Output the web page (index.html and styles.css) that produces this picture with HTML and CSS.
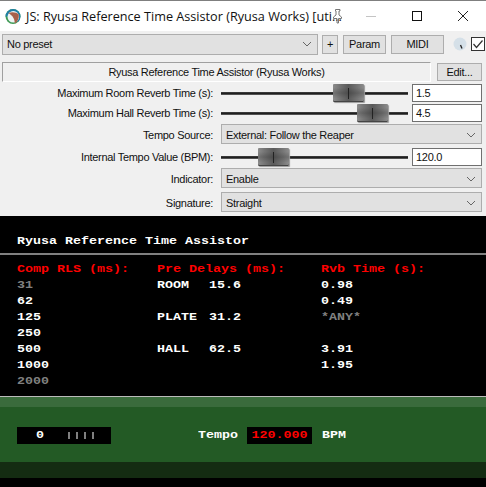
FILE: index.html
```html
<!DOCTYPE html>
<html lang="en">
<head>
<meta charset="utf-8">
<title>JS: Ryusa Reference Time Assistor</title>
<link rel="stylesheet" href="styles.css">
</head>
<body>
<div class="titlebar">
  <svg class="logo" width="16" height="17" viewBox="0 0 16 17">
    <circle cx="8" cy="8.5" r="7.5" fill="#3f9a55"/>
    <path d="M0.5 8.5 A7.5 7.5 0 0 1 15.5 8.5 A7.5 7.5 0 0 1 13 14 L8 8.5 Z" fill="#1f7fa6"/>
    <circle cx="8.3" cy="8.8" r="5.8" fill="#eef3f3"/>
    <path d="M3.2 5 C7 3.8 11.5 4.2 13.8 6.4 C14.2 10 12.8 13.6 9.8 15.6 C9.8 11.5 8 7.5 3.2 5 Z" fill="#a8604a"/>
  </svg>
  <span class="title">JS: Ryusa Reference Time Assistor (Ryusa Works) [uti...</span>
  <svg class="pin" width="15" height="16" viewBox="0 0 15 16">
    <path d="M5.5 1.5 H10 V3 H9 V7 L11.5 9 V10.5 H8.5 V15 H7 V10.5 H3.5 V9 L6 7 V3 H5.5 Z" fill="#fff" fill-opacity="0.45" stroke="#777" stroke-width="1"/>
  </svg>
  <div class="winctl">
    <svg width="12" height="12" viewBox="0 0 12 12"><path d="M1 6.5 H11" stroke="#c4c4c4"/></svg>
    <svg width="12" height="12" viewBox="0 0 12 12"><rect x="1.5" y="1.5" width="9" height="9" fill="none" stroke="#111"/></svg>
    <svg width="12" height="12" viewBox="0 0 12 12"><path d="M1 1 L11 11 M11 1 L1 11" stroke="#222" fill="none"/></svg>
  </div>
</div>

<div class="panel">
  <div class="toolbar">
    <div class="combo preset"><span>No preset</span><svg class="chev" width="10" height="6" viewBox="0 0 10 6"><path d="M1 1 L5 5 L9 1" fill="none" stroke="#666"/></svg></div>
    <div class="btn plus">+</div>
    <div class="btn param">Param</div>
    <div class="btn midi">MIDI</div>
    <svg class="knob" width="14" height="14" viewBox="0 0 14 14"><circle cx="7" cy="7" r="6.5" fill="#d5e0e8"/><path d="M7.5 8 L9 11.5" stroke="#222" stroke-width="1.3"/></svg>
    <svg class="check" width="14" height="14" viewBox="0 0 14 14"><rect x="0.5" y="0.5" width="13" height="13" fill="#fff" stroke="#333"/><path d="M2.5 7 L5.5 10.5 L11.5 3.5" fill="none" stroke="#333" stroke-width="1.2"/></svg>
  </div>

  <div class="namerow">
    <div class="namebox">Ryusa Reference Time Assistor (Ryusa Works)</div>
    <div class="btn edit">Edit...</div>
  </div>

  <div class="params">
    <div class="row h20">
      <label class="lbl">Maximum Room Reverb Time (s):</label>
      <div class="slider"><div class="thumb room"><i></i></div></div>
      <div class="input">1.5</div>
    </div>
    <div class="row h20">
      <label class="lbl">Maximum Hall Reverb Time (s):</label>
      <div class="slider"><div class="thumb hall"><i></i></div></div>
      <div class="input">4.5</div>
    </div>
    <div class="row h24">
      <label class="lbl tall">Tempo Source:</label>
      <div class="combo wide"><span>External: Follow the Reaper</span><svg class="chev" width="10" height="6" viewBox="0 0 10 6"><path d="M1 1 L5 5 L9 1" fill="none" stroke="#666"/></svg></div>
    </div>
    <div class="row h20">
      <label class="lbl">Internal Tempo Value (BPM):</label>
      <div class="slider"><div class="thumb tempo"><i></i></div></div>
      <div class="input">120.0</div>
    </div>
    <div class="row h24">
      <label class="lbl tall">Indicator:</label>
      <div class="combo wide"><span>Enable</span><svg class="chev" width="10" height="6" viewBox="0 0 10 6"><path d="M1 1 L5 5 L9 1" fill="none" stroke="#666"/></svg></div>
    </div>
    <div class="row h24">
      <label class="lbl tall">Signature:</label>
      <div class="combo wide"><span>Straight</span><svg class="chev" width="10" height="6" viewBox="0 0 10 6"><path d="M1 1 L5 5 L9 1" fill="none" stroke="#666"/></svg></div>
    </div>
  </div>
</div>

<div class="screen">
  <div class="heading px"><span class="sq">Ryusa Reference Time Assistor</span></div>
  <div class="rule"></div>
  <div class="table px">
    <div class="col">
      <div class="red"><span class="sq">Comp RLS (ms):</span></div>
      <div class="dim"><span class="sq">31</span></div>
      <div><span class="sq">62</span></div>
      <div><span class="sq">125</span></div>
      <div><span class="sq">250</span></div>
      <div><span class="sq">500</span></div>
      <div><span class="sq">1000</span></div>
      <div class="dim"><span class="sq">2000</span></div>
    </div>
    <div class="col">
      <div class="red"><span class="sq">Pre Delays (ms):</span></div>
      <div class="pair"><span class="sq">ROOM</span><span class="sq">15.6</span></div>
      <div>&nbsp;</div>
      <div class="pair"><span class="sq">PLATE</span><span class="sq">31.2</span></div>
      <div>&nbsp;</div>
      <div class="pair"><span class="sq">HALL</span><span class="sq">62.5</span></div>
    </div>
    <div class="col">
      <div class="red"><span class="sq">Rvb Time (s):</span></div>
      <div><span class="sq">0.98</span></div>
      <div><span class="sq">0.49</span></div>
      <div class="dim"><span class="sq">*ANY*</span></div>
      <div>&nbsp;</div>
      <div><span class="sq">3.91</span></div>
      <div><span class="sq">1.95</span></div>
    </div>
  </div>
</div>

<div class="footer">
  <div class="band-light"></div>
  <div class="band-main px">
    <div class="counter"><span class="zero sq">0</span><span class="ticks"><i></i><i></i><i></i><i></i></span></div>
    <div class="tempo-label"><span class="sq">Tempo</span></div>
    <div class="bpm-box"><span class="sq">120.000</span></div>
    <div class="bpm-label"><span class="sq">BPM</span></div>
  </div>
  <div class="band-dark"></div>
</div>
</body>
</html>
```
FILE: styles.css
```css
* { box-sizing: border-box; }
html, body { margin: 0; padding: 0; }
body {
  width: 486px;
  height: 487px;
  overflow: hidden;
  background: #000;
  font-family: "Liberation Sans", Arial, sans-serif;
  font-size: 11px;
  letter-spacing: -0.3px;
  color: #111;
}

.titlebar {
  position: relative;
  height: 31px;
  background: #fff;
  border-top: 1px solid #7f7f7f;
  display: flex;
  align-items: center;
  padding-left: 5px;
}
.logo { flex: none; }
.title {
  margin-left: 5px;
  font-family: "Open Sans", sans-serif;
  font-size: 12.67px;
  letter-spacing: 0;
  color: #111;
  white-space: nowrap;
}
.pin { position: absolute; left: 330px; top: 7px; }
.winctl {
  position: absolute;
  right: 17px;
  top: 9px;
  display: flex;
  gap: 34px;
}

.panel { background: #f0f0f0; height: 185px; padding-top: 2px; }

.toolbar {
  height: 22px;
  display: flex;
  align-items: center;
  padding-left: 2px;
}
.combo {
  display: flex;
  align-items: center;
  justify-content: space-between;
  height: 20px;
  background: #e1e1e1;
  border: 1px solid #adadad;
  padding: 1px 5px 0 4px;
}
.preset { width: 316px; height: 21px; padding-top: 0; }
.btn {
  display: flex;
  align-items: center;
  justify-content: center;
  height: 19px;
  background: #e1e1e1;
  border: 1px solid #adadad;
}
.plus { width: 16px; margin-left: 4px; }
.param { width: 43px; margin-left: 5px; }
.midi { width: 53px; margin-left: 5px; }
.knob { margin-left: 9px; flex: none; }
.check { margin-left: 4px; flex: none; }

.namerow {
  display: flex;
  align-items: center;
  height: 20px;
  margin-top: 7px;
  padding-left: 2px;
}
.namebox {
  width: 429px;
  height: 20px;
  text-align: center;
  line-height: 18px;
  background: #f0f0f0;
  border: 1px solid #fff;
  border-left-color: #a0a0a0;
  border-top-color: #a0a0a0;
}
.edit { width: 45px; height: 18px; margin-left: 6px; }

.params { margin-top: 2px; }
.row {
  display: grid;
  grid-template-columns: 213px 191px 70px;
  column-gap: 4px;
  align-items: start;
}
.h20 { height: 20px; }
.h24 { height: 24px; }
.lbl { text-align: right; white-space: nowrap; line-height: 18px; }
.lbl.tall { line-height: 22px; }
.row .combo.wide { grid-column: 2 / 4; margin-left: 4px; }
.row .slider { margin: 8px 0 0 4px; }
.slider {
  position: relative;
  height: 3px;
  background: linear-gradient(#444, #1f1f1f 50%, #6a6a6a);
}
.thumb {
  position: absolute;
  top: -8px;
  width: 31px;
  height: 18px;
  border-radius: 1px;
  background:
    linear-gradient(rgba(0, 0, 0, 0) 20%, rgba(0, 0, 0, 0.18) 50%, rgba(0, 0, 0, 0) 80%),
    linear-gradient(90deg, #8c8c8c 0, #767676 20%, #5a5a5a 50%, #767676 80%, #8c8c8c 100%);
  box-shadow: inset 0 -1px 0 #444, 1px 1px 1px #9a9a9a;
  display: flex;
  justify-content: center;
  align-items: center;
}
.thumb i { width: 1px; height: 11px; background: #222; display: block; }
.room { left: 112px; }
.hall { left: 136px; }
.tempo { left: 37px; }
.input {
  height: 18px;
  background: #fff;
  border: 1px solid #707070;
  padding-left: 3px;
  line-height: 16px;
}

.screen { height: 180px; background: #000; color: #fff; padding-top: 18px; }
.px {
  font-family: "Liberation Mono", monospace;
  font-weight: 700;
  font-size: 13.33px;
  letter-spacing: 0;
  line-height: 16px;
  white-space: nowrap;
}
.sq { display: inline-block; transform: scaleY(0.8); }
.heading { padding-left: 17px; height: 16px; }
.rule { height: 2px; background: #808080; margin-top: 3px; }
.table {
  display: grid;
  grid-template-columns: 140px 164px 1fr;
  padding: 7px 0 0 17px;
}
.red { color: #f00; }
.dim { color: #808080; }
.pair { display: flex; }
.pair span:first-child { width: 52px; }

.footer { height: 91px; background: #000; }
.band-light { height: 11px; background: #3a6b3c; border-top: 1px solid #bbb; }
.band-main {
  height: 55px;
  background: #235a25;
  color: #fff;
  display: flex;
  align-items: center;
  padding: 2px 0 0 17px;
}
.counter {
  width: 94px;
  height: 17px;
  background: #000;
  display: flex;
  align-items: center;
  line-height: 17px;
}
.zero { margin-left: 19px; }
.ticks { display: flex; gap: 6px; margin-left: 24px; }
.ticks i { display: block; width: 2px; height: 7px; background: #808080; }
.tempo-label { margin-left: 87px; width: 49px; }
.bpm-box {
  width: 65px;
  height: 17px;
  background: #000;
  color: #f00;
  text-align: center;
  line-height: 17px;
}
.bpm-label { margin-left: 10px; }
.band-dark { height: 16px; background: #142c12; }
.chev { flex: none; }
```
